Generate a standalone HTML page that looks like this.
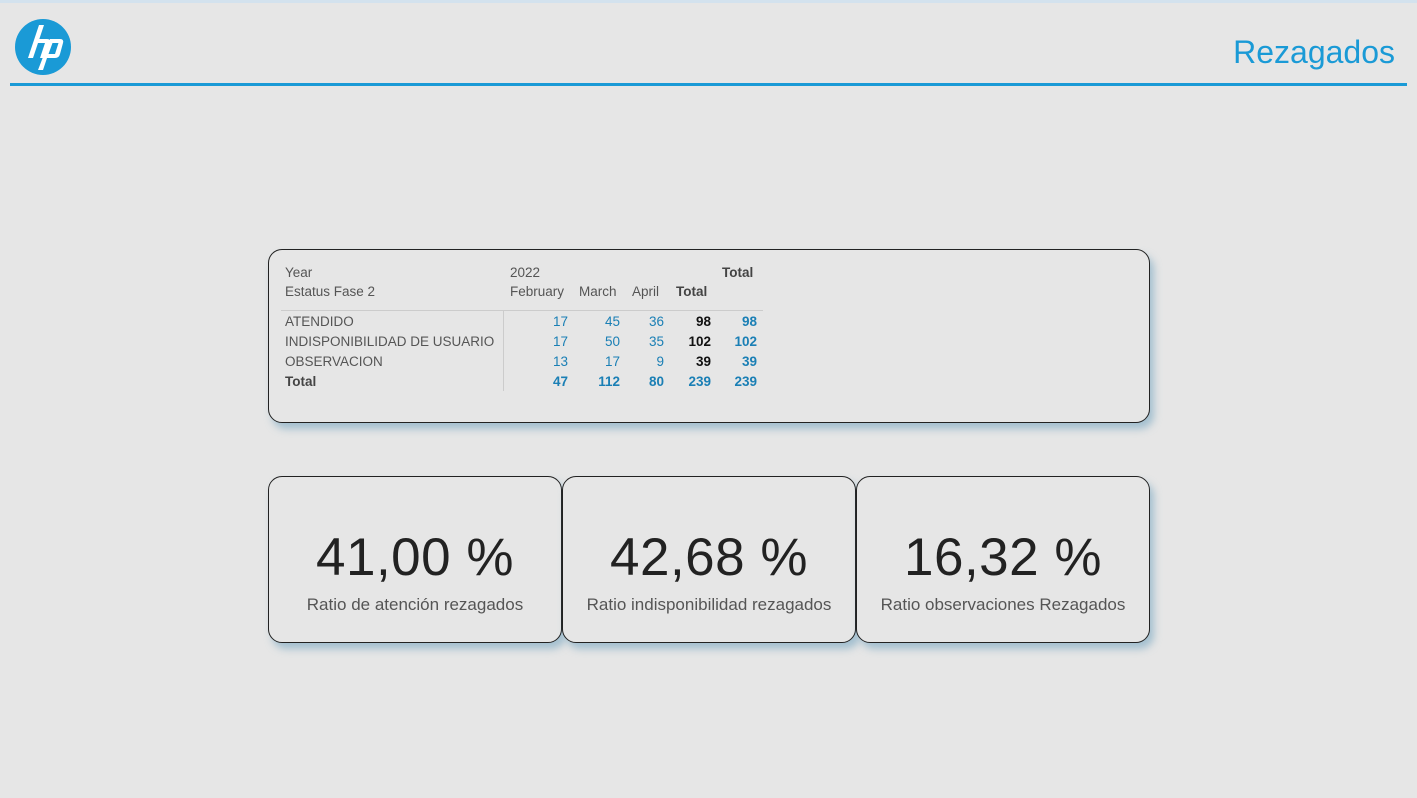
<!DOCTYPE html><html><head><style>
body{margin:0;width:1417px;height:798px;background:#e6e6e6;font-family:"Liberation Sans",sans-serif;position:relative;overflow:hidden}
.a{position:absolute;white-space:nowrap}
.box{position:absolute;border:1px solid #222;border-radius:14px;box-shadow:4px 6px 8px rgba(110,160,190,.55);background:#e6e6e6;box-sizing:border-box}
.t{font-size:13.5px;color:#555}
.r{text-align:right;width:60px}
.b{color:#1a7fb5}.k{color:#111;font-weight:bold}.bb{color:#1a7fb5;font-weight:bold}
.big{font-size:53px;color:#222;width:100%;text-align:center;top:50px;letter-spacing:0.5px}
.lab{font-size:17px;color:#555;width:100%;text-align:center;top:118px}
</style></head><body>
<div class="a" style="left:0;top:0;width:1417px;height:3px;background:#d3e2ee"></div>
<svg class="a" style="left:14px;top:18px" width="58" height="58" viewBox="0 0 58 58"><circle cx="29" cy="29" r="28" fill="#1a9ad6"/>
<path d="M25 7 L30 7 L19 40 L14 40 Z M22 21 L33 21 Q37 21 36 25 L31 40 L26 40 L31 25 L21 25 Z M36 21 L46 21 Q50 21 49 25 L46 36 Q45 40 41 40 L33 40 L29 52 L24 52 Z M38.5 25 L34.5 36 L41 36 L44.5 25 Z" fill="#fff"/></svg>
<div class="a" style="right:22px;top:34px;font-size:32px;color:#1a9ad6">Rezagados</div>
<div class="a" style="left:10px;top:83px;width:1397px;height:3px;background:#1a9ad6"></div>
<div class="box" style="left:268px;top:249px;width:882px;height:174px"></div>
<div class="a" style="left:281px;top:310px;width:482px;height:1px;background:#ccc"></div>
<div class="a" style="left:503px;top:311px;width:1px;height:80px;background:#ccc"></div>
<div class="a t" style="left:285px;top:265px">Year</div>
<div class="a t" style="left:285px;top:284px">Estatus Fase 2</div>
<div class="a t" style="left:510px;top:265px">2022</div>
<div class="a t" style="left:510px;top:284px">February</div>
<div class="a t" style="left:579px;top:284px">March</div>
<div class="a t" style="left:632px;top:284px">April</div>
<div class="a t" style="left:676px;top:284px;font-weight:bold;color:#444">Total</div>
<div class="a t" style="left:722px;top:265px;font-weight:bold;color:#444">Total</div>
<div class="a t" style="left:285px;top:314px">ATENDIDO</div>
<div class="a t" style="left:285px;top:334px">INDISPONIBILIDAD DE USUARIO</div>
<div class="a t" style="left:285px;top:354px">OBSERVACION</div>
<div class="a t" style="left:285px;top:374px;font-weight:bold;color:#444">Total</div>
<div class="a t r b" style="left:508px;top:314px">17</div><div class="a t r b" style="left:560px;top:314px">45</div><div class="a t r b" style="left:604px;top:314px">36</div><div class="a t r k" style="left:651px;top:314px">98</div><div class="a t r bb" style="left:697px;top:314px">98</div>
<div class="a t r b" style="left:508px;top:334px">17</div><div class="a t r b" style="left:560px;top:334px">50</div><div class="a t r b" style="left:604px;top:334px">35</div><div class="a t r k" style="left:651px;top:334px">102</div><div class="a t r bb" style="left:697px;top:334px">102</div>
<div class="a t r b" style="left:508px;top:354px">13</div><div class="a t r b" style="left:560px;top:354px">17</div><div class="a t r b" style="left:604px;top:354px">9</div><div class="a t r k" style="left:651px;top:354px">39</div><div class="a t r bb" style="left:697px;top:354px">39</div>
<div class="a t r bb" style="left:508px;top:374px">47</div><div class="a t r bb" style="left:560px;top:374px">112</div><div class="a t r bb" style="left:604px;top:374px">80</div><div class="a t r bb" style="left:651px;top:374px">239</div><div class="a t r bb" style="left:697px;top:374px">239</div>
<div class="box" style="left:268px;top:476px;width:294px;height:167px"><div class="a big">41,00 %</div><div class="a lab">Ratio de atención rezagados</div></div>
<div class="box" style="left:562px;top:476px;width:294px;height:167px"><div class="a big">42,68 %</div><div class="a lab">Ratio indisponibilidad rezagados</div></div>
<div class="box" style="left:856px;top:476px;width:294px;height:167px"><div class="a big">16,32 %</div><div class="a lab">Ratio observaciones Rezagados</div></div>
</body></html>
